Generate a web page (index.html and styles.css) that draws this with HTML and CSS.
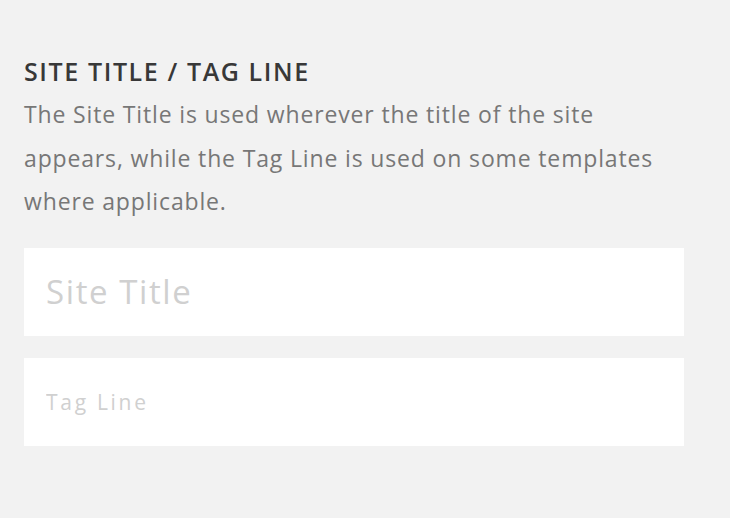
FILE: index.html
```html
<!DOCTYPE html>
<html lang="en">
<head>
  <meta charset="UTF-8" />
  <title>Site Title / Tag Line</title>
  <link rel="stylesheet" href="styles.css">
</head>
<body>
  <div class="panel">
    <h2>Site Title / Tag Line</h2>
    <p class="desc">The Site Title is used wherever the title of the site appears, while the Tag Line is used on some templates where applicable.</p>
    <input type="text" class="field field-title" placeholder="Site Title" />
    <input type="text" class="field field-tag" placeholder="Tag Line" />
  </div>
</body>
</html>
```

FILE: styles.css
```css
body {
  margin: 0;
  background: #f2f2f2;
  font-family: 'Open Sans', sans-serif;
}
.panel {
  width: 660px;
  padding: 56px 24px 0;
  display: flex;
  flex-direction: column;
}
h2 {
  margin: 0;
  font-size: 25px;
  line-height: 30px;
  font-weight: 600;
  text-transform: uppercase;
  color: #383838;
  letter-spacing: 1.6px;
}
.desc {
  margin: 7px 0 0;
  font-size: 23px;
  line-height: 43.5px;
  color: #777;
  letter-spacing: 0.85px;
}
.field {
  box-sizing: border-box;
  width: 660px;
  height: 88px;
  margin: 24px 0 0;
  padding: 0 22px;
  border: none;
  background: white;
  font-family: 'Open Sans', sans-serif;
  color: #333;
  outline: none;
}
.field-title {
  font-size: 33px;
  letter-spacing: 1.6px;
}
.field-tag {
  margin-top: 22px;
  font-size: 21px;
  letter-spacing: 2.7px;
}
.field::placeholder {
  color: #d0d0d0;
}
```
